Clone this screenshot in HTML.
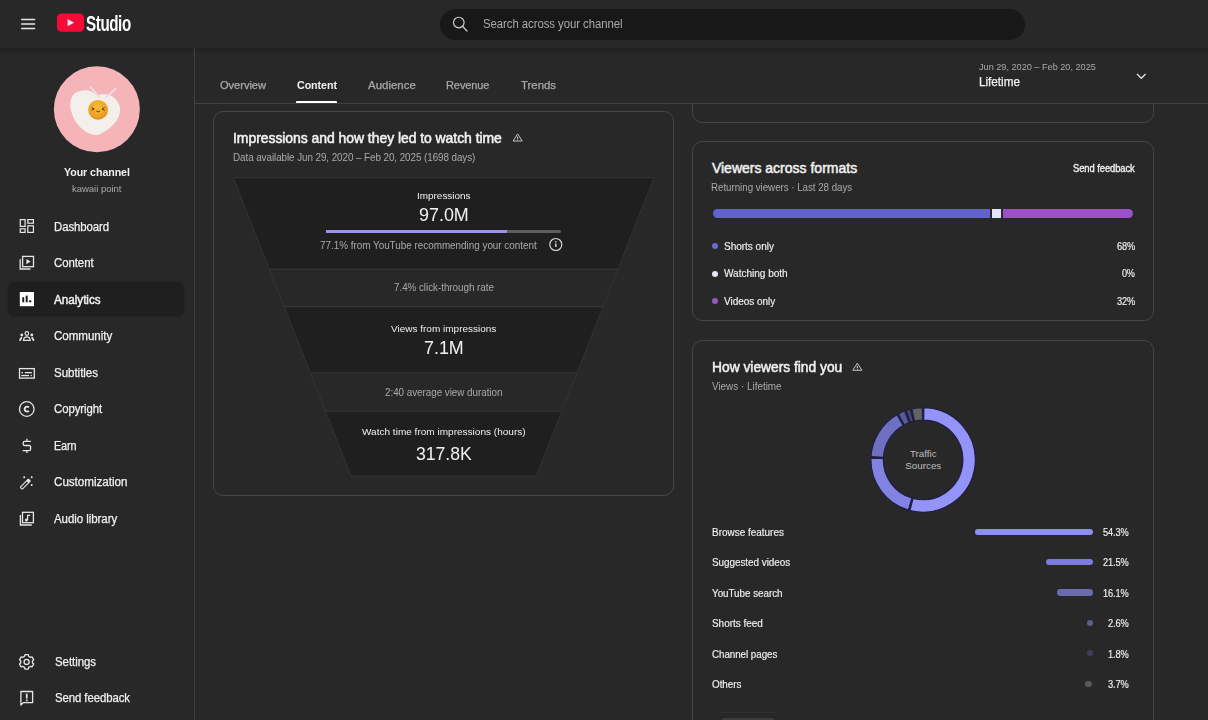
<!DOCTYPE html>
<html><head><meta charset="utf-8"><title>Channel analytics - YouTube Studio</title>
<style>
html,body{margin:0;padding:0;width:1208px;height:720px;overflow:hidden;background:#282828;}
body{position:relative;font-family:"Liberation Sans", sans-serif;}
.abs{position:absolute;}
.t{position:absolute;white-space:pre;line-height:1;}
.card{position:absolute;box-sizing:border-box;border:1px solid #464646;border-radius:10px;}
</style></head><body>
<!-- header -->
<div class="abs" style="left:0;top:0;width:1208px;height:48px;background:#282828;"></div>
<div class="abs" style="left:0;top:48px;width:1208px;height:6px;background:linear-gradient(rgba(0,0,0,0.2),rgba(0,0,0,0));"></div>
<div class="abs" style="left:439.6px;top:8.8px;width:585.4px;height:31px;border-radius:15.5px;background:#181818;"></div>
<div class="t" style="left:85.8px;top:13.4px;font-size:22.2px;font-weight:700;color:#ffffff;letter-spacing:-0.6px;transform:scaleX(0.685);transform-origin:0 0;">Studio</div>
<!-- sidebar -->
<div class="abs" style="left:194px;top:48px;width:1px;height:672px;background:#404040;"></div>
<div class="abs" style="left:8px;top:282px;width:176px;height:34px;border-radius:7px;background:#1f1f1f;box-shadow:0 0 3px rgba(0,0,0,0.25);"></div>
<svg class="abs" style="left:0;top:0" width="200" height="200"><defs><radialGradient id="yk" cx="0.45" cy="0.35" r="0.7"><stop offset="0" stop-color="#f7bb3a"/><stop offset="0.7" stop-color="#eea125"/><stop offset="1" stop-color="#d9861a"/></radialGradient><filter id="bl" x="-20%" y="-20%" width="140%" height="140%"><feGaussianBlur stdDeviation="0.6"/></filter></defs><circle cx="96.85" cy="109.3" r="43" fill="#f5b4b7"/><path d="M82.8 90.4 C88 89.5 93 91.5 97 95.5 C103 93 112 94 116.2 99.9 C120 104 120.5 109 119.8 112.5 C119 118 116 123 110.8 127 C105 131.5 100 135 96.3 135.1 C91 135 85 132 80 127 C75 122 72 115 70.6 109 C69.5 103 71 97 74 94 C76.5 91.5 79.5 90.8 82.8 90.4 Z" fill="#f3f0ec" filter="url(#bl)"/><path d="M89.6 87.6 L91.2 86.6 L100.4 97.2 L98.6 98.4 Z" fill="#efdde4"/><path d="M115.6 87.4 L117 88.8 L106.2 98.6 L104.6 97.4 Z" fill="#efdde4"/><circle cx="98.1" cy="109.8" r="9.9" fill="url(#yk)"/><path d="M91.6 107.6 L94.2 109 L91.6 110.4 M104.6 107.6 L102 109 L104.6 110.4 M96.4 111 Q98.1 112.8 99.8 111" fill="none" stroke="#4a2a08" stroke-width="0.9"/></svg>
<!-- top-right cut card -->
<div class="abs" style="left:0;top:104px;width:1208px;height:30px;overflow:hidden;">
  <div class="card" style="left:692px;top:-60px;width:462px;height:79px;"></div>
</div>
<!-- tab bar -->
<div class="abs" style="left:195px;top:103px;width:1013px;height:1px;background:#424242;"></div>
<div class="abs" style="left:296.4px;top:101px;width:40.4px;height:2px;background:#ffffff;border-radius:1px 1px 0 0;"></div>
<!-- card 1 -->
<div class="card" style="left:213px;top:111px;width:461px;height:385px;"></div>
<svg class="abs" style="left:0;top:0" width="1208" height="720"><polygon points="233.30,177.8 654.00,177.8 617.92,269.2 269.38,269.2" fill="#1f1f1f"/><polygon points="269.38,269.2 617.92,269.2 603.16,306.6 284.14,306.6" fill="#282828"/><polygon points="284.14,306.6 603.16,306.6 576.95,373.0 310.35,373.0" fill="#1f1f1f"/><polygon points="310.35,373.0 576.95,373.0 561.96,411.0 325.34,411.0" fill="#282828"/><polygon points="325.34,411.0 561.96,411.0 536.30,476.0 351.00,476.0" fill="#1f1f1f"/><polygon points="233.30,177.8 654.00,177.8 536.30,476.0 351.00,476.0" fill="none" stroke="#343434" stroke-width="1"/><line x1="269.38" y1="269.2" x2="617.92" y2="269.2" stroke="#363636" stroke-width="1.2"/><line x1="284.14" y1="306.6" x2="603.16" y2="306.6" stroke="#363636" stroke-width="1.2"/><line x1="310.35" y1="373.0" x2="576.95" y2="373.0" stroke="#363636" stroke-width="1.2"/><line x1="325.34" y1="411.0" x2="561.96" y2="411.0" stroke="#363636" stroke-width="1.2"/></svg>
<div class="abs" style="left:325.6px;top:229.7px;width:235.6px;height:3.2px;background:#5e5e5e;border-radius:0 1.6px 1.6px 0;"></div>
<div class="abs" style="left:325.6px;top:229.7px;width:181.6px;height:3.2px;background:#9a92ee;"></div>
<!-- card 2 -->
<div class="card" style="left:692px;top:141px;width:462px;height:180px;"></div>
<div class="abs" style="left:713px;top:208.8px;width:277.2px;height:9.4px;background:#6262cf;border-radius:4.7px 0 0 4.7px;"></div>
<div class="abs" style="left:991.9px;top:208.8px;width:9.3px;height:9.4px;background:#e3e3fb;"></div>
<div class="abs" style="left:1002.7px;top:208.8px;width:130.4px;height:9.4px;background:#9a50c8;border-radius:0 4.7px 4.7px 0;"></div>
<div class="abs" style="left:711.7px;top:243px;width:6px;height:6px;border-radius:50%;background:#6b6bd4;"></div>
<div class="abs" style="left:711.7px;top:270.5px;width:6px;height:6px;border-radius:50%;background:#e6e6fa;"></div>
<div class="abs" style="left:711.7px;top:298px;width:6px;height:6px;border-radius:50%;background:#9a55c9;"></div>
<!-- card 3 -->
<div class="card" style="left:692px;top:340px;width:462px;height:420px;"></div>
<svg class="abs" style="left:0;top:0" width="1208" height="720"><path d="M923.92 407.71 A52.2 52.2 0 1 1 909.96 510.42 L913.08 498.42 A39.8 39.8 0 1 0 923.73 420.10 Z" fill="#9494f8" stroke="#1c1c44" stroke-width="1.1" stroke-linejoin="miter"/><path d="M908.38 509.98 A52.2 52.2 0 0 1 870.93 458.10 L883.32 458.52 A39.8 39.8 0 0 0 911.88 498.08 Z" fill="#8282e2" stroke="#1c1c44" stroke-width="1.1" stroke-linejoin="miter"/><path d="M871.01 456.46 A52.2 52.2 0 0 1 896.95 414.72 L903.16 425.45 A39.8 39.8 0 0 0 883.39 457.28 Z" fill="#7070c2" stroke="#1c1c44" stroke-width="1.1" stroke-linejoin="miter"/><path d="M898.38 413.92 A52.2 52.2 0 0 1 904.65 411.07 L909.03 422.67 A39.8 39.8 0 0 0 904.26 424.84 Z" fill="#5a5a94" stroke="#1c1c44" stroke-width="1.1" stroke-linejoin="miter"/><path d="M906.19 410.51 A52.2 52.2 0 0 1 910.28 409.30 L913.32 421.32 A39.8 39.8 0 0 0 910.21 422.25 Z" fill="#47476c" stroke="#1c1c44" stroke-width="1.1" stroke-linejoin="miter"/><path d="M911.87 408.92 A52.2 52.2 0 0 1 922.28 407.71 L922.47 420.10 A39.8 39.8 0 0 0 914.54 421.03 Z" fill="#636363" stroke="#1c1c44" stroke-width="1.1" stroke-linejoin="miter"/></svg>
<div class="abs" style="left:974.9px;top:528.5px;width:118.3px;height:6.4px;border-radius:3.2px;background:#8e8ef0;"></div>
<div class="abs" style="left:1046.1px;top:558.8px;width:47.1px;height:6.4px;border-radius:3.2px;background:#7c7cde;"></div>
<div class="abs" style="left:1057.2px;top:589.4px;width:36px;height:6.4px;border-radius:3.2px;background:#6a6aae;"></div>
<div class="abs" style="left:1086.8px;top:620px;width:6px;height:6px;border-radius:50%;background:#5d5d96;"></div>
<div class="abs" style="left:1086.8px;top:650.3px;width:6px;height:6px;border-radius:50%;background:#3f3f5e;"></div>
<div class="abs" style="left:1085px;top:680.9px;width:7px;height:6.6px;border-radius:50%;background:#595959;"></div>
<div class="abs" style="left:720px;top:712px;width:55px;height:1px;background:#2f2f2f;"></div>
<div class="abs" style="left:720px;top:717.6px;width:56px;height:20px;border-radius:5px;background:#3c3c3c;"></div>
<svg class="abs" style="left:0;top:0" width="1208" height="720"><rect x="21" y="18.75" width="14.3" height="1.5" rx="0.7" fill="#e8e8e8"/><rect x="21" y="23.25" width="14.3" height="1.5" rx="0.7" fill="#e8e8e8"/><rect x="21" y="27.75" width="14.3" height="1.5" rx="0.7" fill="#e8e8e8"/><rect x="57.0" y="13.6" width="27.1" height="18.2" rx="4.4" fill="#f80a38"/><polygon points="67.6,19.1 67.6,26.3 74.1,22.7" fill="#f8eaf0"/><circle cx="458.8" cy="22.5" r="5.3" fill="none" stroke="#d0d0d0" stroke-width="1.15"/><line x1="462.7" y1="26.5" x2="467.0" y2="31.0" stroke="#d0d0d0" stroke-width="1.2" stroke-linecap="round"/><g fill="none" stroke="#e6e6e6" stroke-width="1.2"><rect x="20.3" y="219.6" width="4.8" height="6.8"/><rect x="27.8" y="219.6" width="5.6" height="3.6"/><rect x="20.3" y="228.8" width="4.8" height="3.6"/><rect x="27.8" y="225.8" width="5.6" height="6.6"/></g><g fill="none" stroke="#e6e6e6" stroke-width="1.3"><rect x="22.6" y="256.4" width="10.9" height="10.3"/><path d="M20.2 259.2 V269.0 H30.4"/></g><polygon points="26.4,258.9 26.4,264.2 30.6,261.55" fill="#e6e6e6"/><rect x="19.8" y="292.0" width="14.2" height="14.2" fill="#ffffff"/><rect x="22.3" y="297.2" width="1.9" height="5.1" fill="#1f1f1f"/><rect x="25.7" y="295.6" width="2.0" height="6.7" fill="#1f1f1f"/><path d="M29.2 300.2 H31.2 L31.4 302.3 H29.0 Z" fill="#1f1f1f"/><g fill="none" stroke="#e6e6e6" stroke-width="1.2"><circle cx="26.85" cy="333.5" r="1.8"/><path d="M23.5 340.3 C23.7 337.6 25.2 336.9 26.85 336.9 C28.5 336.9 30.0 337.6 30.2 340.3 Z"/></g><g fill="#e6e6e6"><circle cx="21.8" cy="335.0" r="1.4"/><circle cx="31.8" cy="335.0" r="1.4"/></g><g stroke="#e6e6e6" stroke-width="1.7" stroke-linecap="round"><line x1="21.4" y1="337.8" x2="20.0" y2="340.2"/><line x1="32.2" y1="337.8" x2="33.6" y2="340.2"/></g><rect x="19.5" y="368.6" width="14.8" height="9.5" fill="none" stroke="#e6e6e6" stroke-width="1.3"/><rect x="21.5" y="372.0" width="1.5" height="1.3" fill="#e6e6e6"/><rect x="24.8" y="372.0" width="7.1" height="1.3" fill="#e6e6e6"/><rect x="21.3" y="374.9" width="7.7" height="1.3" fill="#e6e6e6"/><rect x="30.6" y="374.9" width="1.3" height="1.3" fill="#e6e6e6"/><circle cx="26.75" cy="409.0" r="7.3" fill="none" stroke="#e6e6e6" stroke-width="1.3"/><path d="M28.9 407.4 A2.5 2.5 0 1 0 28.9 410.9" fill="none" stroke="#e6e6e6" stroke-width="1.9"/><path d="M30.9 441.4 H24.8 Q23.2 441.4 23.2 443.0 V443.9 Q23.2 445.5 24.8 445.5 H29.0 Q30.6 445.5 30.6 447.1 V449.0 Q30.6 450.6 29.0 450.6 H22.7" fill="none" stroke="#e6e6e6" stroke-width="1.3"/><line x1="26.9" y1="438.7" x2="26.9" y2="441.4" stroke="#e6e6e6" stroke-width="1.3"/><line x1="26.9" y1="450.6" x2="26.9" y2="452.9" stroke="#e6e6e6" stroke-width="1.3"/><g transform="rotate(-45 25.3 484.1)"><rect x="19.5" y="482.7" width="11.6" height="2.8" rx="0.6" fill="none" stroke="#e6e6e6" stroke-width="1.1"/><rect x="28.2" y="482.7" width="2.9" height="2.8" fill="#e6e6e6"/></g><g fill="#e6e6e6"><circle cx="24.2" cy="477.3" r="1.0"/><circle cx="31.7" cy="477.3" r="1.0"/><circle cx="31.7" cy="485.0" r="1.0"/></g><g fill="none" stroke="#e6e6e6" stroke-width="1.3"><rect x="22.5" y="512.3" width="10.9" height="10.4"/><path d="M20.4 515.0 V525.0 H31.8"/></g><circle cx="26.4" cy="519.9" r="1.5" fill="#e6e6e6"/><path d="M27.6 520.0 V515.4 H30.2" fill="none" stroke="#e6e6e6" stroke-width="1.2"/><path d="M24.49 656.39 L24.94 654.69 L28.26 654.69 L28.71 656.39 L30.31 657.31 L32.01 656.85 L33.68 659.74 L32.43 660.98 L32.43 662.82 L33.68 664.06 L32.01 666.95 L30.31 666.49 L28.71 667.41 L28.26 669.11 L24.94 669.11 L24.49 667.41 L22.89 666.49 L21.19 666.95 L19.52 664.06 L20.77 662.82 L20.77 660.98 L19.52 659.74 L21.19 656.85 L22.89 657.31 Z" fill="none" stroke="#e6e6e6" stroke-width="1.3" stroke-linejoin="round"/><circle cx="26.6" cy="661.9" r="2.5" fill="none" stroke="#e6e6e6" stroke-width="1.3"/><path d="M20.9 705.0 V691.5 H32.6 V702.6 H23.4 Z" fill="none" stroke="#e6e6e6" stroke-width="1.3" stroke-linejoin="round"/><rect x="25.9" y="693.6" width="1.7" height="5.0" fill="#e6e6e6"/><rect x="25.9" y="699.6" width="1.7" height="1.6" fill="#e6e6e6"/><path d="M1137 74 L1141.3 78.3 L1145.6 74" fill="none" stroke="#e6e6e6" stroke-width="1.3"/><path d="M517.65 133.9 L522.1999999999999 141.0 H513.0999999999999 Z" fill="none" stroke="#c4c4c4" stroke-width="1.0" stroke-linejoin="round"/><rect x="517.15" y="136.6" width="1.0" height="2.3" fill="#dddddd"/><rect x="517.15" y="139.5" width="1.0" height="0.9" fill="#cccccc"/><path d="M857.35 363.2 L861.9 370.3 H852.8 Z" fill="none" stroke="#c4c4c4" stroke-width="1.0" stroke-linejoin="round"/><rect x="856.85" y="365.9" width="1.0" height="2.3" fill="#dddddd"/><rect x="856.85" y="368.8" width="1.0" height="0.9" fill="#cccccc"/><circle cx="555.8" cy="244.5" r="6.0" fill="none" stroke="#dddddd" stroke-width="1.15"/><rect x="555.15" y="243.5" width="1.35" height="3.5" fill="#e6e6e6"/><rect x="555.15" y="241.2" width="1.35" height="1.35" fill="#e6e6e6"/></svg>
<div class="t" style="left:482.50px;top:18.44px;font-size:12.0px;color:#aaaaaa;letter-spacing:-0.059px;transform:scaleX(0.9472);transform-origin:0 0;">Search across your channel</div>
<div class="t" style="left:63.85px;top:166.92px;font-size:11.2px;color:#f1f1f1;font-weight:700;letter-spacing:-0.059px;transform:scaleX(0.9501);transform-origin:0 0;">Your channel</div>
<div class="t" style="left:72.00px;top:184.30px;font-size:9.8px;color:#aaaaaa;letter-spacing:-0.025px;transform:scaleX(0.9700);transform-origin:0 0;">kawaii point</div>
<div class="t" style="left:54.40px;top:220.54px;font-size:12.0px;color:#f1f1f1;letter-spacing:-0.073px;transform:scaleX(0.9463);transform-origin:0 0;-webkit-text-stroke:0.25px #f1f1f1;">Dashboard</div>
<div class="t" style="left:54.40px;top:257.09px;font-size:12.0px;color:#f1f1f1;letter-spacing:-0.064px;transform:scaleX(0.9509);transform-origin:0 0;-webkit-text-stroke:0.25px #f1f1f1;">Content</div>
<div class="t" style="left:54.40px;top:293.64px;font-size:12.0px;color:#f1f1f1;letter-spacing:-0.027px;transform:scaleX(0.9749);transform-origin:0 0;-webkit-text-stroke:0.45px #f1f1f1;">Analytics</div>
<div class="t" style="left:54.40px;top:330.19px;font-size:12.0px;color:#f1f1f1;letter-spacing:-0.048px;transform:scaleX(0.9653);transform-origin:0 0;-webkit-text-stroke:0.25px #f1f1f1;">Community</div>
<div class="t" style="left:54.40px;top:366.74px;font-size:12.0px;color:#f1f1f1;letter-spacing:-0.039px;transform:scaleX(0.9626);transform-origin:0 0;-webkit-text-stroke:0.25px #f1f1f1;">Subtitles</div>
<div class="t" style="left:54.40px;top:403.29px;font-size:12.0px;color:#f1f1f1;letter-spacing:-0.062px;transform:scaleX(0.9477);transform-origin:0 0;-webkit-text-stroke:0.25px #f1f1f1;">Copyright</div>
<div class="t" style="left:54.40px;top:439.84px;font-size:12.0px;color:#f1f1f1;letter-spacing:-0.157px;transform:scaleX(0.9045);transform-origin:0 0;-webkit-text-stroke:0.25px #f1f1f1;">Earn</div>
<div class="t" style="left:54.40px;top:476.39px;font-size:12.0px;color:#f1f1f1;letter-spacing:-0.034px;transform:scaleX(0.9706);transform-origin:0 0;-webkit-text-stroke:0.25px #f1f1f1;">Customization</div>
<div class="t" style="left:54.40px;top:512.94px;font-size:12.0px;color:#f1f1f1;letter-spacing:-0.046px;transform:scaleX(0.9554);transform-origin:0 0;-webkit-text-stroke:0.25px #f1f1f1;">Audio library</div>
<div class="t" style="left:54.60px;top:655.64px;font-size:12.0px;color:#f1f1f1;letter-spacing:-0.053px;transform:scaleX(0.9537);transform-origin:0 0;-webkit-text-stroke:0.25px #f1f1f1;">Settings</div>
<div class="t" style="left:54.60px;top:692.14px;font-size:12.0px;color:#f1f1f1;letter-spacing:-0.067px;transform:scaleX(0.9463);transform-origin:0 0;-webkit-text-stroke:0.25px #f1f1f1;">Send feedback</div>
<div class="t" style="left:219.80px;top:78.58px;font-size:11.6px;color:#aaaaaa;letter-spacing:-0.052px;transform:scaleX(0.9588);transform-origin:0 0;-webkit-text-stroke:0.25px #aaaaaa;">Overview</div>
<div class="t" style="left:297.00px;top:78.58px;font-size:11.6px;color:#f1f1f1;font-weight:700;letter-spacing:-0.103px;transform:scaleX(0.9260);transform-origin:0 0;">Content</div>
<div class="t" style="left:368.00px;top:78.58px;font-size:11.6px;color:#aaaaaa;letter-spacing:-0.012px;transform:scaleX(0.9899);transform-origin:0 0;-webkit-text-stroke:0.25px #aaaaaa;">Audience</div>
<div class="t" style="left:446.20px;top:78.58px;font-size:11.6px;color:#aaaaaa;letter-spacing:-0.078px;transform:scaleX(0.9463);transform-origin:0 0;-webkit-text-stroke:0.25px #aaaaaa;">Revenue</div>
<div class="t" style="left:521.40px;top:78.58px;font-size:11.6px;color:#aaaaaa;letter-spacing:-0.021px;transform:scaleX(0.9839);transform-origin:0 0;-webkit-text-stroke:0.25px #aaaaaa;">Trends</div>
<div class="t" style="left:978.50px;top:62.61px;font-size:9.2px;color:#aaaaaa;letter-spacing:-0.004px;transform:scaleX(0.9953);transform-origin:0 0;">Jun 29, 2020 – Feb 20, 2025</div>
<div class="t" style="left:978.50px;top:76.45px;font-size:12.1px;color:#f1f1f1;letter-spacing:-0.030px;transform:scaleX(0.9725);transform-origin:0 0;-webkit-text-stroke:0.25px #f1f1f1;">Lifetime</div>
<div class="t" style="left:232.70px;top:130.54px;font-size:14.6px;color:#f1f1f1;letter-spacing:-0.054px;transform:scaleX(0.9573);transform-origin:0 0;-webkit-text-stroke:0.55px #f1f1f1;">Impressions and how they led to watch time</div>
<div class="t" style="left:232.70px;top:151.82px;font-size:10.6px;color:#aaaaaa;letter-spacing:-0.067px;transform:scaleX(0.9290);transform-origin:0 0;">Data available Jun 29, 2020 – Feb 20, 2025 (1698 days)</div>
<div class="t" style="left:416.75px;top:191.42px;font-size:9.9px;color:#f1f1f1;letter-spacing:0.005px;transform:scaleX(1.0053);transform-origin:0 0;">Impressions</div>
<div class="t" style="left:418.90px;top:206.46px;font-size:18.0px;color:#f1f1f1;letter-spacing:-0.009px;transform:scaleX(0.9961);transform-origin:0 0;">97.0M</div>
<div class="t" style="left:320.00px;top:240.76px;font-size:10.2px;color:#aaaaaa;letter-spacing:-0.026px;transform:scaleX(0.9729);transform-origin:0 0;">77.1% from YouTube recommending your content</div>
<div class="t" style="left:393.75px;top:283.46px;font-size:10.2px;color:#aaaaaa;letter-spacing:-0.031px;transform:scaleX(0.9648);transform-origin:0 0;">7.4% click-through rate</div>
<div class="t" style="left:390.80px;top:323.62px;font-size:9.9px;color:#f1f1f1;letter-spacing:0.009px;transform:scaleX(1.0102);transform-origin:0 0;">Views from impressions</div>
<div class="t" style="left:423.90px;top:338.76px;font-size:18.0px;color:#f1f1f1;letter-spacing:-0.016px;transform:scaleX(0.9932);transform-origin:0 0;">7.1M</div>
<div class="t" style="left:384.90px;top:387.86px;font-size:10.2px;color:#aaaaaa;letter-spacing:-0.030px;transform:scaleX(0.9661);transform-origin:0 0;">2:40 average view duration</div>
<div class="t" style="left:361.80px;top:427.12px;font-size:9.9px;color:#f1f1f1;letter-spacing:0.011px;transform:scaleX(1.0139);transform-origin:0 0;">Watch time from impressions (hours)</div>
<div class="t" style="left:416.00px;top:445.06px;font-size:18.0px;color:#f1f1f1;letter-spacing:-0.038px;transform:scaleX(0.9814);transform-origin:0 0;">317.8K</div>
<div class="t" style="left:711.90px;top:161.25px;font-size:14.0px;color:#f1f1f1;letter-spacing:0.001px;-webkit-text-stroke:0.5px #f1f1f1;">Viewers across formats</div>
<div class="t" style="left:1072.90px;top:163.73px;font-size:10.0px;color:#f1f1f1;letter-spacing:-0.066px;transform:scaleX(0.9373);transform-origin:0 0;-webkit-text-stroke:0.35px #f1f1f1;">Send feedback</div>
<div class="t" style="left:711.40px;top:182.63px;font-size:10.0px;color:#aaaaaa;letter-spacing:-0.022px;transform:scaleX(0.9742);transform-origin:0 0;">Returning viewers · Last 28 days</div>
<div class="t" style="left:723.75px;top:242.09px;font-size:10.4px;color:#f1f1f1;letter-spacing:-0.031px;transform:scaleX(0.9669);transform-origin:0 0;-webkit-text-stroke:0.15px #f1f1f1;">Shorts only</div>
<div class="t" style="left:1116.50px;top:242.23px;font-size:10.0px;color:#f1f1f1;letter-spacing:-0.143px;transform:scaleX(0.9250);transform-origin:0 0;-webkit-text-stroke:0.15px #f1f1f1;">68%</div>
<div class="t" style="left:723.75px;top:269.34px;font-size:10.4px;color:#f1f1f1;letter-spacing:-0.030px;transform:scaleX(0.9698);transform-origin:0 0;-webkit-text-stroke:0.15px #f1f1f1;">Watching both</div>
<div class="t" style="left:1121.85px;top:269.48px;font-size:10.0px;color:#f1f1f1;letter-spacing:-0.256px;transform:scaleX(0.9087);transform-origin:0 0;-webkit-text-stroke:0.15px #f1f1f1;">0%</div>
<div class="t" style="left:723.75px;top:296.84px;font-size:10.4px;color:#f1f1f1;letter-spacing:-0.036px;transform:scaleX(0.9630);transform-origin:0 0;-webkit-text-stroke:0.15px #f1f1f1;">Videos only</div>
<div class="t" style="left:1116.50px;top:296.98px;font-size:10.0px;color:#f1f1f1;letter-spacing:-0.143px;transform:scaleX(0.9250);transform-origin:0 0;-webkit-text-stroke:0.15px #f1f1f1;">32%</div>
<div class="t" style="left:712.00px;top:359.75px;font-size:14.0px;color:#f1f1f1;letter-spacing:-0.016px;transform:scaleX(0.9873);transform-origin:0 0;-webkit-text-stroke:0.5px #f1f1f1;">How viewers find you</div>
<div class="t" style="left:712.00px;top:381.63px;font-size:10.0px;color:#aaaaaa;letter-spacing:-0.008px;transform:scaleX(0.9904);transform-origin:0 0;">Views · Lifetime</div>
<div class="t" style="left:909.96px;top:448.60px;font-size:9.8px;color:#bdbdbd;">Traffic</div>
<div class="t" style="left:905.32px;top:460.80px;font-size:9.8px;color:#bdbdbd;">Sources</div>
<div class="t" style="left:711.60px;top:527.66px;font-size:10.2px;color:#f1f1f1;letter-spacing:-0.019px;transform:scaleX(0.9804);transform-origin:0 0;-webkit-text-stroke:0.15px #f1f1f1;">Browse features</div>
<div class="t" style="left:1102.70px;top:527.66px;font-size:10.2px;color:#f1f1f1;letter-spacing:-0.133px;transform:scaleX(0.9053);transform-origin:0 0;-webkit-text-stroke:0.15px #f1f1f1;">54.3%</div>
<div class="t" style="left:711.60px;top:557.96px;font-size:10.2px;color:#f1f1f1;letter-spacing:-0.029px;transform:scaleX(0.9707);transform-origin:0 0;-webkit-text-stroke:0.15px #f1f1f1;">Suggested videos</div>
<div class="t" style="left:1102.70px;top:557.96px;font-size:10.2px;color:#f1f1f1;letter-spacing:-0.133px;transform:scaleX(0.9053);transform-origin:0 0;-webkit-text-stroke:0.15px #f1f1f1;">21.5%</div>
<div class="t" style="left:711.60px;top:588.86px;font-size:10.2px;color:#f1f1f1;letter-spacing:-0.035px;transform:scaleX(0.9661);transform-origin:0 0;-webkit-text-stroke:0.15px #f1f1f1;">YouTube search</div>
<div class="t" style="left:1102.70px;top:588.86px;font-size:10.2px;color:#f1f1f1;letter-spacing:-0.133px;transform:scaleX(0.9053);transform-origin:0 0;-webkit-text-stroke:0.15px #f1f1f1;">16.1%</div>
<div class="t" style="left:711.60px;top:619.36px;font-size:10.2px;color:#f1f1f1;letter-spacing:-0.021px;transform:scaleX(0.9777);transform-origin:0 0;-webkit-text-stroke:0.15px #f1f1f1;">Shorts feed</div>
<div class="t" style="left:1107.60px;top:619.36px;font-size:10.2px;color:#f1f1f1;letter-spacing:-0.135px;transform:scaleX(0.9104);transform-origin:0 0;-webkit-text-stroke:0.15px #f1f1f1;">2.6%</div>
<div class="t" style="left:711.60px;top:649.66px;font-size:10.2px;color:#f1f1f1;letter-spacing:-0.042px;transform:scaleX(0.9601);transform-origin:0 0;-webkit-text-stroke:0.15px #f1f1f1;">Channel pages</div>
<div class="t" style="left:1107.60px;top:649.66px;font-size:10.2px;color:#f1f1f1;letter-spacing:-0.135px;transform:scaleX(0.9104);transform-origin:0 0;-webkit-text-stroke:0.15px #f1f1f1;">1.8%</div>
<div class="t" style="left:711.60px;top:679.76px;font-size:10.2px;color:#f1f1f1;letter-spacing:-0.034px;transform:scaleX(0.9691);transform-origin:0 0;-webkit-text-stroke:0.15px #f1f1f1;">Others</div>
<div class="t" style="left:1107.60px;top:679.76px;font-size:10.2px;color:#f1f1f1;letter-spacing:-0.135px;transform:scaleX(0.9104);transform-origin:0 0;-webkit-text-stroke:0.15px #f1f1f1;">3.7%</div>
</body></html>
